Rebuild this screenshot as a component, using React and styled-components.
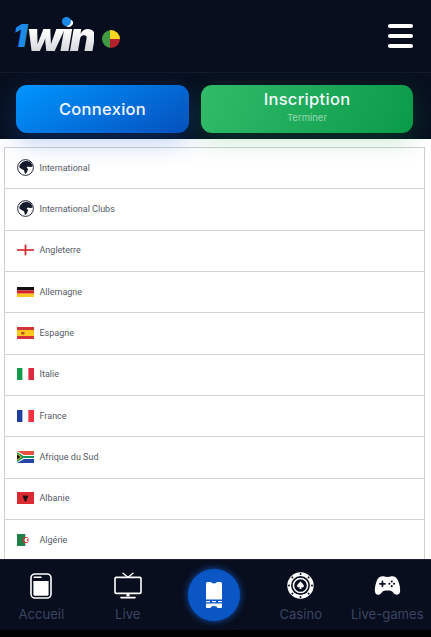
import React from "react";
import styled, { createGlobalStyle } from "styled-components";
import { IoGameController } from "react-icons/io5";

const GlobalStyle = createGlobalStyle`
  html, body {
    margin: 0;
    padding: 0;
    background: #000;
  }
  body {
    font-family: "Inter", "Liberation Sans", sans-serif;
  }
  * {
    box-sizing: border-box;
  }
`;

const Page = styled.div`
  width: 431px;
  height: 637px;
  display: flex;
  flex-direction: column;
  overflow: hidden;
  background: #fff;
`;

const Header = styled.header`
  height: 73px;
  flex: none;
  display: flex;
  align-items: center;
  justify-content: space-between;
  padding: 0 18px 0 14px;
  background: #080e1e;
  border-bottom: 1px solid #141a2b;
`;

const Logo = styled.div`
  display: flex;
  align-items: center;
  gap: 8px;
  margin-top: 6px;
`;

const LogoMark = styled.div`
  position: relative;
  display: flex;
  margin-top: -6px;
  font-size: 41px;
  line-height: 44px;
  font-weight: 900;
  font-style: italic;
  letter-spacing: -2.6px;
`;

const LogoOne = styled.span`
  font-size: 32px;
  color: #1d8ae8;
  margin-left: -1px;
  margin-right: 2px;
`;

const LogoWord = styled.span`
  background: linear-gradient(180deg, #ffffff 35%, #c9ccd2 100%);
  -webkit-background-clip: text;
  background-clip: text;
  color: transparent;
`;

const LogoDot = styled.i`
  position: absolute;
  left: 48px;
  top: 3px;
  width: 9px;
  height: 9px;
  border-radius: 50%;
  background: #1d8ae8;
`;

const MenuButton = styled.div`
  width: 25px;
  display: flex;
  flex-direction: column;
  gap: 6px;
`;

const MenuBar = styled.span`
  height: 4px;
  border-radius: 2px;
  background: #fff;
`;

const AuthPanel = styled.div`
  position: relative;
  z-index: 2;
  height: 66px;
  flex: none;
  display: flex;
  gap: 12px;
  padding: 12px 18px 0 16px;
  background: #08101f;
`;

const AuthButton = styled.div`
  width: ${(p) => p.$width}px;
  height: 48px;
  border-radius: 11px;
  display: flex;
  flex-direction: column;
  align-items: center;
  justify-content: center;
  color: #f4f8ff;
  font-size: 16.5px;
  line-height: 20px;
  font-weight: 500;
  letter-spacing: 0.3px;
  background: ${(p) => p.$bg};
  box-shadow: ${(p) => p.$glow};
`;

const AuthHint = styled.small`
  font-size: 9.5px;
  line-height: 13px;
  font-weight: 400;
  letter-spacing: 0;
  color: rgba(255, 255, 255, 0.55);
  margin-top: 2px;
  margin-bottom: 5px;
`;

const Content = styled.main`
  flex: 1;
  min-height: 0;
  overflow: hidden;
  padding: 9px 6px 0 4px;
  margin-top: -1px;
  background: #fff;
`;

const Table = styled.div`
  border: 1px solid #cfcfcf;
  border-bottom: 0;
`;

const Row = styled.div`
  height: 41.33px;
  display: flex;
  align-items: center;
  gap: 5.5px;
  padding-left: 12px;
  padding-bottom: 1px;
  border-bottom: 1px solid #d2d2d2;
  font-family: "Roboto", "Liberation Sans", sans-serif;
  font-size: 9px;
  color: #555a66;
`;

const FlagBox = styled.span`
  width: 17px;
  height: 17px;
  flex: none;
  display: flex;
  align-items: center;
  justify-content: center;
`;

const BottomNav = styled.nav`
  height: 71px;
  flex: none;
  display: grid;
  grid-template-columns: repeat(5, 86.5px);
  margin-left: -2px;
  width: 433px;
  background: #080e1e;
  border-top: 1px solid #1a2030;
`;

const NavItem = styled.div`
  display: flex;
  flex-direction: column;
  align-items: center;
  justify-content: flex-start;
  padding-top: 12px;
  gap: 5px;
  white-space: nowrap;
  font-size: 13.1px;
  line-height: 20px;
  color: #3a4560;
`;

const IconSlot = styled.div`
  height: 27px;
  display: flex;
  align-items: center;
  justify-content: center;
`;

const CenterSlot = styled.div`
  display: flex;
  align-items: flex-start;
  justify-content: center;
  padding-top: 9px;
`;

const CenterButton = styled.div`
  width: 52px;
  height: 52px;
  border-radius: 50%;
  display: flex;
  align-items: center;
  justify-content: center;
  background: #0a56c4;
  box-shadow: 0 0 7px rgba(20, 110, 240, 0.75);
`;

const Footer = styled.div`
  height: 7px;
  flex: none;
  background: #000;
`;

const flagProps = { width: 17, viewBox: "0 0 16 12", preserveAspectRatio: "none" };

const Globe = () => (
  <svg width="17" height="17" viewBox="0 0 17 17">
    <circle cx="8.5" cy="8.5" r="7.9" fill="#fff" stroke="#252a3a" strokeWidth="1" />
    <path
      d="M2.6 6 5.4 3 9 1.8l4.2 1 2.4 3.7-.3 1.3-2.5.3-2-.6-1.2 1 1.6 1.8-1.8 3.6-1.4 1.2L7 11.3 4.6 10 2.3 8.6z"
      fill="#161b2b"
    />
  </svg>
);

const England = () => (
  <svg {...flagProps} height="12">
    <rect y="5.2" width="16" height="1.6" fill="#d8232f" />
    <rect x="7.2" y="0.6" width="1.6" height="10.8" fill="#d8232f" />
  </svg>
);

const Germany = () => (
  <svg {...flagProps} height="10">
    <rect width="16" height="4" fill="#111" />
    <rect y="4" width="16" height="4" fill="#d8232f" />
    <rect y="8" width="16" height="4" fill="#fbc81e" />
  </svg>
);

const Spain = () => (
  <svg {...flagProps} height="12">
    <rect width="16" height="12" fill="#d5323a" />
    <rect y="3" width="16" height="6" fill="#fbc81e" />
    <rect x="4" y="5" width="3" height="2.4" rx="0.6" fill="#b5472a" />
  </svg>
);

const Italy = () => (
  <svg {...flagProps} height="12">
    <rect width="5.3" height="12" fill="#129a4b" />
    <rect x="5.3" width="5.4" height="12" fill="#fff" />
    <rect x="10.7" width="5.3" height="12" fill="#dc2a3e" />
  </svg>
);

const France = () => (
  <svg {...flagProps} height="12">
    <rect width="5.3" height="12" fill="#1f3e9c" />
    <rect x="5.3" width="5.4" height="12" fill="#fff" />
    <rect x="10.7" width="5.3" height="12" fill="#f0313f" />
  </svg>
);

const SouthAfrica = () => (
  <svg {...flagProps} height="12">
    <rect width="16" height="6" fill="#e5503f" />
    <rect y="6" width="16" height="6" fill="#2546a8" />
    <path d="M0 0 6.5 4H16v4H6.5L0 12z" fill="#fff" />
    <path d="M0 1 6 4.9H16v2.2H6L0 11z" fill="#16925a" />
    <path d="M0 2.4 4.6 6 0 9.6z" fill="#fbc81e" />
    <path d="M0 3.4 3.4 6 0 8.6z" fill="#111" />
  </svg>
);

const Albania = () => (
  <svg {...flagProps} height="12">
    <rect width="16" height="12" fill="#da2a32" />
    <path d="M5.5 3.4h1.3l.6.5.6-.9.6.9.6-.5h1.3l-.5 3-1 .4.3 1.8-1.3.9-1.3-.9.3-1.8-1-.4z" fill="#1a1012" />
  </svg>
);

const Algeria = () => (
  <svg {...flagProps} height="12">
    <rect width="8" height="12" fill="#1f8045" />
    <rect x="8" width="8" height="12" fill="#fff" />
    <circle cx="8.2" cy="6" r="2.6" fill="none" stroke="#de2a3a" strokeWidth="1" />
    <circle cx="9.2" cy="6" r="2.1" fill="#fff" />
    <circle cx="10" cy="6" r="0.9" fill="#de2a3a" />
  </svg>
);

const HomeIcon = () => (
  <svg width="22" height="26" viewBox="0 0 22 26">
    <rect x="1" y="1" width="20" height="24" rx="4" fill="none" stroke="#fff" strokeWidth="1.6" />
    <rect x="3.6" y="3.4" width="8" height="1.6" rx="0.6" fill="#fff" />
    <path d="M3.4 8h15.2v13.2a1.6 1.6 0 0 1-1.6 1.6H5a1.6 1.6 0 0 1-1.6-1.6z" fill="#fff" />
  </svg>
);

const TvIcon = () => (
  <svg width="28" height="27" viewBox="0 0 28 27" fill="none" stroke="#fff">
    <path d="M9 1.2 13.6 5 M19 1.2 14.4 5" strokeWidth="1.4" strokeLinecap="round" />
    <rect x="1" y="5.4" width="26" height="16" rx="1.2" strokeWidth="1.6" />
    <path d="M14 21.4v3" strokeWidth="3" />
    <path d="M7 25.6h14" strokeWidth="1.6" strokeLinecap="round" />
  </svg>
);

const TicketIcon = () => (
  <svg width="18" height="28" viewBox="0 0 18 28" fill="#fff">
    <path d="M1 2.5A1.5 1.5 0 0 1 2.5 1H6c.3.9 1.5 1.4 3 1.4s2.7-.5 3-1.4h3.5A1.5 1.5 0 0 1 17 2.5V18.5H1z" />
    <rect x="1" y="20" width="4" height="1.2" />
    <rect x="7" y="20" width="4" height="1.2" />
    <rect x="13" y="20" width="4" height="1.2" />
    <path d="M1 22.6h16v3.6A1 1 0 0 1 16 27h-3.6c-.3-1.2-1.7-1.9-3.4-1.9s-3.1.7-3.4 1.9H2a1 1 0 0 1-1-.8z" />
  </svg>
);

const ChipIcon = () => (
  <svg width="27" height="27" viewBox="0 0 27 27">
    <circle cx="13.5" cy="13.5" r="13.2" fill="#fff" />
    <circle cx="13.5" cy="13.5" r="9.4" fill="#080e1e" />
    <circle cx="13.5" cy="13.5" r="7.8" fill="#fff" />
    <circle cx="13.5" cy="13.5" r="6.3" fill="#080e1e" />
    {[0, 45, 90, 135, 180, 225, 270, 315].map((a) => (
      <rect key={a} x="12.5" y="1" width="2" height="2" rx="1" fill="#080e1e" transform={`rotate(${a} 13.5 13.5)`} />
    ))}
    <path
      d="M13.5 9.2c1 1.6 3.4 2.8 3.4 4.8 0 1.4-1.8 2-2.9.9l.6 2.2h-2.2l.6-2.2c-1.1 1.1-2.9.5-2.9-.9 0-2 2.4-3.2 3.4-4.8z"
      fill="#fff"
    />
  </svg>
);

const leagues = [
  { name: "International", Flag: Globe },
  { name: "International Clubs", Flag: Globe },
  { name: "Angleterre", Flag: England },
  { name: "Allemagne", Flag: Germany },
  { name: "Espagne", Flag: Spain },
  { name: "Italie", Flag: Italy },
  { name: "France", Flag: France },
  { name: "Afrique du Sud", Flag: SouthAfrica },
  { name: "Albanie", Flag: Albania },
  { name: "Algérie", Flag: Algeria },
];

const App = () => {
  return (
    <Page>
      <GlobalStyle />
      <Header>
        <Logo>
          <LogoMark>
            <LogoOne>1</LogoOne>
            <LogoWord>win</LogoWord>
            <LogoDot />
          </LogoMark>
          <svg width="18" height="18" viewBox="0 0 18 18">
            <clipPath id="benin">
              <circle cx="9" cy="9" r="9" />
            </clipPath>
            <g clipPath="url(#benin)">
              <rect width="8" height="18" fill="#3f9a42" />
              <rect x="8" width="10" height="9" fill="#fcd920" />
              <rect x="8" y="9" width="10" height="9" fill="#b3202e" />
            </g>
          </svg>
        </Logo>
        <MenuButton>
          <MenuBar />
          <MenuBar />
          <MenuBar />
        </MenuButton>
      </Header>

      <AuthPanel>
        <AuthButton
          $width={173}
          $bg="linear-gradient(150deg, #0096ff 0%, #0550bd 100%)"
          $glow="0 8px 26px rgba(10, 90, 210, 0.3)"
        >
          Connexion
        </AuthButton>
        <AuthButton
          $width={212}
          $bg="linear-gradient(110deg, #31bb69 0%, #0a9b49 100%)"
          $glow="0 8px 26px rgba(20, 160, 70, 0.24)"
        >
          Inscription
          <AuthHint>Terminer</AuthHint>
        </AuthButton>
      </AuthPanel>

      <Content>
        <Table>
          {leagues.map(({ name, Flag }) => (
            <Row key={name}>
              <FlagBox>
                <Flag />
              </FlagBox>
              {name}
            </Row>
          ))}
        </Table>
      </Content>

      <BottomNav>
        <NavItem>
          <IconSlot>
            <HomeIcon />
          </IconSlot>
          Accueil
        </NavItem>
        <NavItem>
          <IconSlot>
            <TvIcon />
          </IconSlot>
          Live
        </NavItem>
        <CenterSlot>
          <CenterButton>
            <TicketIcon />
          </CenterButton>
        </CenterSlot>
        <NavItem>
          <IconSlot>
            <ChipIcon />
          </IconSlot>
          Casino
        </NavItem>
        <NavItem>
          <IconSlot>
            <IoGameController size={27} color="#fff" />
          </IconSlot>
          Live-games
        </NavItem>
      </BottomNav>
      <Footer />
    </Page>
  );
};

export default App;
